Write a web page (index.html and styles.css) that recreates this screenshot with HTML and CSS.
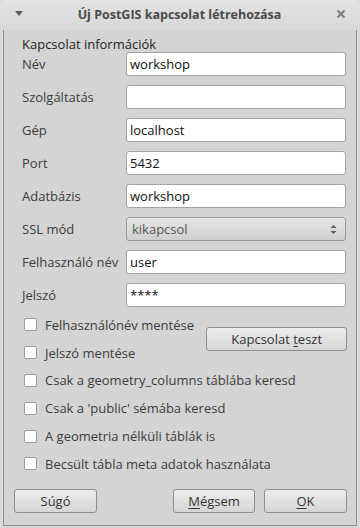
FILE: index.html
```html
<!DOCTYPE html>
<html>
<head>
<meta charset="utf-8">
<link rel="stylesheet" href="styles.css">
</head>
<body>
<div class="window">
  <div class="titlebar">
    <svg class="menu-icon" width="8" height="6" viewBox="0 0 8 6"><path d="M0 0H8L4 5Z" fill="#5a5a5a"/></svg>
    <div class="title">Új PostGIS kapcsolat létrehozása</div>
    <svg class="close-icon" width="10" height="10" viewBox="0 0 10 10"><path d="M1.5 1.5L8.5 8.5M8.5 1.5L1.5 8.5" stroke="#7a7a7a" stroke-width="2"/></svg>
  </div>
  <div class="content">
    <div class="heading">Kapcsolat információk</div>
    <div class="form">
      <label class="label">Név</label><div class="input">workshop</div>
      <label class="label">Szolgáltatás</label><div class="input"></div>
      <label class="label">Gép</label><div class="input">localhost</div>
      <label class="label">Port</label><div class="input">5432</div>
      <label class="label">Adatbázis</label><div class="input">workshop</div>
      <label class="label">SSL mód</label>
      <div class="select"><span>kikapcsol</span>
        <svg width="7" height="11" viewBox="0 0 7 11"><path d="M0.5 4L3.5 1L6.5 4Z M0.5 7L3.5 10L6.5 7Z" fill="#5a5a5a"/></svg>
      </div>
      <label class="label">Felhasználó név</label><div class="input">user</div>
      <label class="label">Jelszó</label><div class="input">****</div>
    </div>
    <div class="checks-top">
      <div class="checks-col">
        <div class="check"><span class="box"></span><span>Felhasználónév mentése</span></div>
        <div class="check"><span class="box"></span><span>Jelszó mentése</span></div>
      </div>
      <div class="btn test-btn"><span>Kapcsolat <u>t</u>eszt</span></div>
    </div>
    <div class="check"><span class="box"></span><span>Csak a geometry_columns táblába keresd</span></div>
    <div class="check"><span class="box"></span><span>Csak a 'public' sémába keresd</span></div>
    <div class="check"><span class="box"></span><span>A geometria nélküli táblák is</span></div>
    <div class="check"><span class="box"></span><span>Becsült tábla meta adatok használata</span></div>
    <div class="buttons">
      <div class="btn help-btn">Súgó</div>
      <div class="spacer"></div>
      <div class="btn cancel-btn"><span><u>M</u>égsem</span></div>
      <div class="btn ok-btn"><span><u>O</u>K</span></div>
    </div>
  </div>
</div>
</body>
</html>
```
FILE: styles.css
```css
* { box-sizing: border-box; }
html, body { margin: 0; padding: 0; }
body { background: #d4d4d4; }
.window {
  width: 360px;
  height: 528px;
  background: #d9d9d9;
  font-family: "Open Sans", "DejaVu Sans", sans-serif;
  font-size: 13px;
  color: #3c3c3c;
  border-radius: 4px 4px 0 0;
}
.titlebar {
  height: 30px;
  display: flex;
  align-items: center;
  padding: 0 14px 0 15px;
  background: linear-gradient(#e2e2e2, #d8d8d8);
  border-radius: 4px 4px 0 0;
}
.menu-icon { margin-top: -3px; }
.title {
  flex: 1;
  text-align: center;
  font-weight: bold;
  font-size: 12.5px;
  color: #4a4a4a;
  margin-top: -2px;
}
.close-icon { margin-top: -3px; }
.content {
  margin: 0 3px;
  height: 496px;
  background: #d4d4d4;
  border: 1px solid #8e8e8e;
  border-top: none;
  padding: 7px 9px 0 18px;
}
.heading {
  height: 15px;
  line-height: 15px;
  color: #1e1e1e;
}
.form {
  display: grid;
  grid-template-columns: 104px 220px;
  grid-auto-rows: 24px;
  row-gap: 9px;
  align-items: center;
}
.label { color: #3c3c3c; }
.input {
  height: 24px;
  background: #fff;
  border: 1px solid #a4a4a4;
  border-radius: 3px;
  padding: 0 3px;
  line-height: 22px;
  color: #111;
}
.select {
  height: 24px;
  border: 1px solid #9a9a9a;
  border-radius: 3px;
  background: linear-gradient(#e6e6e6, #cfcfcf);
  display: flex;
  align-items: center;
  justify-content: space-between;
  padding: 0 8px 0 5px;
  color: #555;
}
.checks-top {
  display: flex;
  align-items: center;
  margin-top: 4px;
}
.checks-col { width: 185px; }
.check {
  height: 27.8px;
  display: flex;
  align-items: center;
  margin-left: 2px;
}
.box {
  width: 13px;
  height: 13px;
  background: #fff;
  border: 1px solid #9c9c9c;
  border-radius: 2px;
  margin-right: 8px;
  flex-shrink: 0;
}
.btn {
  height: 24px;
  border: 1px solid #8e8e8e;
  border-radius: 3px;
  background: linear-gradient(#ededed, #d6d6d6);
  display: flex;
  align-items: center;
  justify-content: center;
  color: #333;
}
.btn u { text-decoration-thickness: 1px; text-underline-offset: 2px; }
.test-btn { width: 141px; }
.buttons {
  display: flex;
  margin-top: 11px;
  margin-left: -8px;
}
.spacer { flex: 1; }
.help-btn { width: 83px; }
.cancel-btn { width: 82px; margin-right: 9px; }
.ok-btn { width: 83px; }
```
